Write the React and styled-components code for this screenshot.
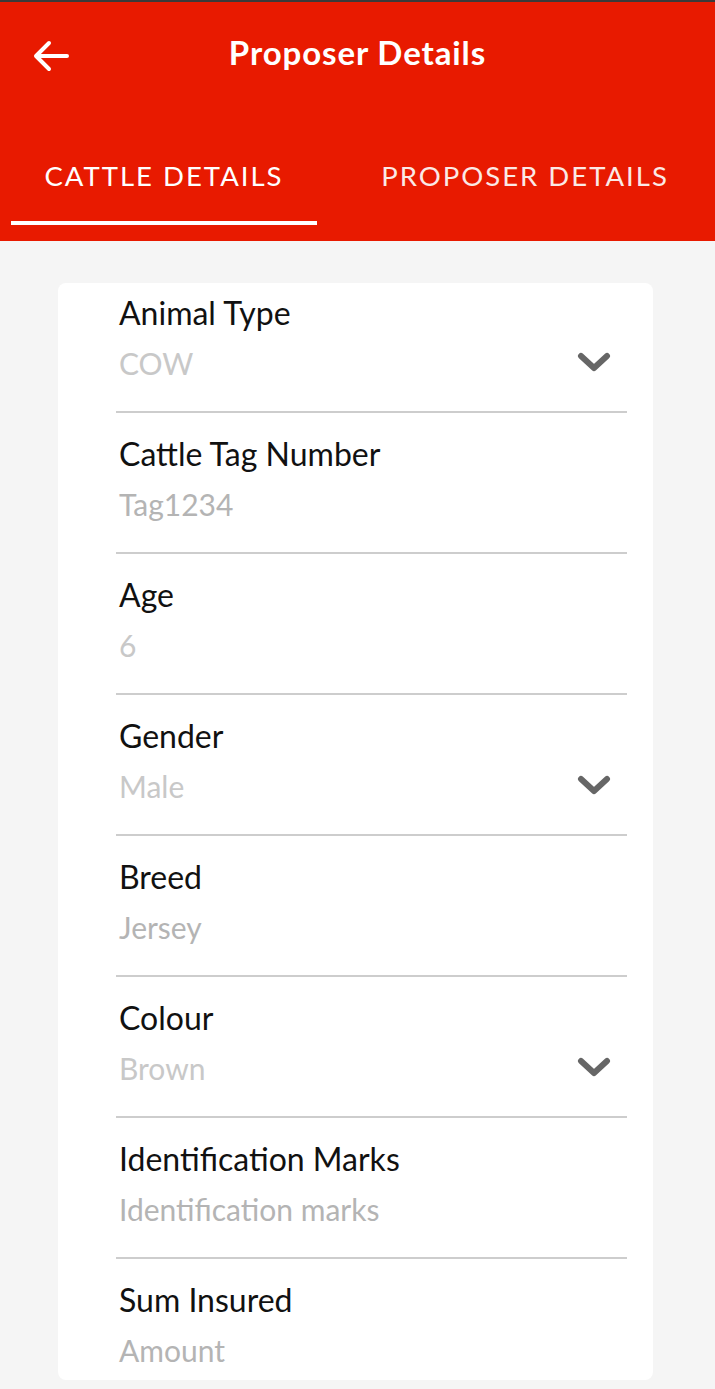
import React from 'react';
import styled, { createGlobalStyle } from 'styled-components';

const GlobalStyle = createGlobalStyle`
  body {
    margin: 0;
    background-color: #f5f5f5;
    font-family: Lato, "Open Sans", sans-serif;
  }
`;

const Header = styled.header`
  background-color: #e81a00;
  border-top: 2px solid #3a3a3a;
  color: white;
`;

const Toolbar = styled.div`
  position: relative;
  height: 100px;
  display: flex;
  align-items: center;
  justify-content: center;
`;

const BackButton = styled.button`
  position: absolute;
  left: 30px;
  top: 34px;
  width: 42px;
  height: 40px;
  padding: 0;
  border: none;
  background: transparent;
  display: flex;
  align-items: center;
  justify-content: center;
`;

const Title = styled.h1`
  margin: 0;
  font-size: 33px;
  font-weight: 700;
  letter-spacing: 0.9px;
`;

const TabRow = styled.nav`
  display: flex;
  padding: 28px 0 16px 11px;
  gap: 18px;
`;

const Tab = styled.div`
  height: 91px;
  display: flex;
  align-items: center;
  justify-content: center;
  width: ${(p) => p.$width};
  border-bottom: 4px solid ${(p) => (p.$active ? '#ffffff' : 'transparent')};
  font-size: 27.5px;
  letter-spacing: 2px;
  text-transform: uppercase;
  color: ${(p) => (p.$active ? '#ffffff' : '#fbe9e6')};
`;

const Card = styled.section`
  margin: 42px 62px 0 58px;
  background: #ffffff;
  border-radius: 8px;
  padding-bottom: 12px;
`;

const Field = styled.div`
  margin: 0 26px 0 58px;
  padding: ${(p) => (p.$first ? '12px' : '23px')} 0 ${(p) => (p.$last ? '0' : '30px')} 3px;
  border-bottom: ${(p) => (p.$last ? 'none' : '2px solid #cdcdcd')};
`;

const Label = styled.div`
  font-size: 32px;
  line-height: 36px;
  color: #111111;
`;

const ValueRow = styled.div`
  margin-top: 14px;
  display: flex;
  align-items: center;
  justify-content: space-between;
  padding-right: 16px;
`;

const Value = styled.div`
  font-size: 30px;
  line-height: 36px;
  color: ${(p) => (p.$select ? '#c8c8c8' : '#b4b4b4')};
`;

const Chevron = () => (
  <svg width="34" height="24" viewBox="0 0 34 24">
    <path d="M4 5 L17 17 L30 5" fill="none" stroke="#666666" strokeWidth="6" strokeLinecap="round" strokeLinejoin="round" />
  </svg>
);

const BackArrow = () => (
  <svg width="40" height="36" viewBox="0 0 40 36">
    <path d="M36 18 H6 M18 5 L5 18 L18 31" fill="none" stroke="#ffffff" strokeWidth="4" strokeLinecap="round" strokeLinejoin="round" />
  </svg>
);

const fields = [
  { label: 'Animal Type', value: 'COW', select: true },
  { label: 'Cattle Tag Number', value: 'Tag1234' },
  { label: 'Age', value: '6', select: true },
  { label: 'Gender', value: 'Male', select: true, dropdown: true },
  { label: 'Breed', value: 'Jersey' },
  { label: 'Colour', value: 'Brown', select: true, dropdown: true },
  { label: 'Identification Marks', value: 'Identification marks' },
  { label: 'Sum Insured', value: 'Amount' },
];

export default function App() {
  return (
    <>
      <GlobalStyle />
      <Header>
        <Toolbar>
          <BackButton aria-label="Back">
            <BackArrow />
          </BackButton>
          <Title>Proposer Details</Title>
        </Toolbar>
        <TabRow>
          <Tab $active $width="306px">Cattle Details</Tab>
          <Tab $width="380px">Proposer Details</Tab>
        </TabRow>
      </Header>
      <Card>
        {fields.map((f, i) => (
          <Field key={f.label} $first={i === 0} $last={i === fields.length - 1}>
            <Label>{f.label}</Label>
            <ValueRow>
              <Value $select={f.select}>{f.value}</Value>
              {(i === 0 || f.dropdown) && <Chevron />}
            </ValueRow>
          </Field>
        ))}
      </Card>
    </>
  );
}
